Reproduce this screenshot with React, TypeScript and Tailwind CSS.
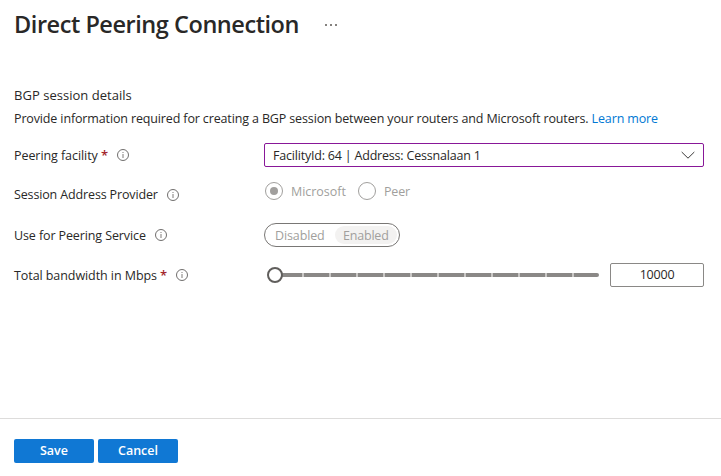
import React from 'react';

function InfoIcon({ className = '' }: { className?: string }) {
  return (
    <svg className={`h-3 w-3 shrink-0 ${className}`} viewBox="0 0 12 12" fill="none">
      <circle cx="6" cy="6" r="5.5" stroke="#605e5c" strokeWidth="0.9" />
      <path d="M6 5v4M6 3v1" stroke="#8a8886" strokeWidth="1.1" />
    </svg>
  );
}

function Label({ text, textClass, required = false }: { text: string; textClass: string; required?: boolean }) {
  return (
    <div className="flex h-6 w-[250px] shrink-0 items-center whitespace-nowrap">
      <span className={textClass}>{text}</span>
      {required && <span className="ml-[3px] w-[7px] text-[13px] font-semibold text-[#a4262c]">*</span>}
      <InfoIcon className="ml-[9px]" />
    </div>
  );
}

function Radio({ checked = false }: { checked?: boolean }) {
  return (
    <span className="flex h-[18px] w-[18px] items-center justify-center rounded-full border border-[#a19f9d]">
      {checked && <span className="h-2 w-2 rounded-full bg-[#a19f9d]" />}
    </span>
  );
}

export default function App() {
  return (
    <main className="flex h-[476px] w-[721px] flex-col overflow-hidden bg-white font-['Open_Sans','Noto_Sans',sans-serif] text-[12.5px] leading-[18px] text-[#292827]">
      <header className="flex h-[50px] items-center pl-[14px]">
        <h1 className="w-[285px] whitespace-nowrap pb-0.5 text-[23.5px] font-semibold leading-8 tracking-[-0.45px]">Direct Peering Connection</h1>
        <button className="ml-[26px] flex gap-[3px]" aria-label="More">
          <span className="h-[2px] w-[2px] bg-[#85827f]" />
          <span className="h-[2px] w-[2px] bg-[#85827f]" />
          <span className="h-[2px] w-[2px] bg-[#85827f]" />
        </button>
      </header>
      <section className="h-[368px] pl-[14px] pt-[36px]">
        <h2 className="h-6 text-[13px] tracking-[0.03px]">BGP session details</h2>
        <p className="whitespace-nowrap tracking-[-0.137px]">
          Provide information required for creating a BGP session between your routers and Microsoft routers.{' '}
          <a className="text-[#0078d4]">Learn more</a>
        </p>
        <div className="mt-[15px] flex">
          <Label text="Peering facility" textClass="w-[84px] pt-0.5 tracking-[-0.07px]" required />
          <div className="flex h-6 w-[440px] items-center justify-between rounded-[2px] border border-[#881798] pl-2 pr-2">
            <span className="pt-0.5 tracking-[-0.2px]">FacilityId: 64 | Address: Cessnalaan 1</span>
            <svg className="h-[8px] w-[14px]" viewBox="0 0 14 8" fill="none"><path d="M.7 1 7 7.2 13.3 1" stroke="#3b3a39" /></svg>
          </div>
        </div>
        <div className="mt-4 flex">
          <Label text="Session Address Provider" textClass="w-[144px] tracking-[-0.14px]" />
          <div className="-mt-1 flex h-6 items-center pl-px text-[#a19f9d]">
            <Radio checked />
            <span className="ml-2 w-[67px] pt-0.5 tracking-[-0.04px]">Microsoft</span>
            <Radio />
            <span className="ml-2 pt-0.5 tracking-[-0.2px]">Peer</span>
          </div>
        </div>
        <div className="mt-4 flex">
          <Label text="Use for Peering Service" textClass="w-[132px] pt-0.5 tracking-[-0.11px]" />
          <div className="flex h-6 w-[136px] items-center rounded-full border border-[#797775] text-[#a19f9d]">
            <span className="w-[70px] pl-[10px] pt-0.5 tracking-[-0.12px]">Disabled</span>
            <span className="h-[18px] w-[62px] rounded-full bg-[#f3f2f1] pl-2 leading-5 tracking-[-0.2px]">Enabled</span>
          </div>
        </div>
        <div className="mt-4 flex">
          <Label text="Total bandwidth in Mbps" textClass="w-[143px] pt-0.5 tracking-[-0.07px]" required />
          <div className="flex h-6 w-[335px] items-center pl-[3px]">
            <div className="z-10 h-4 w-4 shrink-0 rounded-full border-2 border-[#605e5c] bg-white" />
            <div className="-ml-2 grid h-1 w-[324px] shrink-0 grid-cols-12 overflow-hidden rounded-r-[2px] bg-[#8a8886]">
              {Array.from({ length: 12 }, (_, i) => (
                <span key={i} className="border-l-2 border-[#c8c6c4] first:border-l-0" />
              ))}
            </div>
          </div>
          <div className="ml-[11px] flex h-6 w-[94px] items-center justify-center rounded-[2px] border border-[#8a8886] tracking-[-0.2px]">10000</div>
        </div>
      </section>
      <footer className="flex h-[58px] gap-1 border-t border-[#dddcdb] pl-[14px] pt-5 font-semibold text-white">
        <button className="h-6 w-20 rounded-[2px] bg-[#1078d4]">Save</button>
        <button className="h-6 w-20 rounded-[2px] bg-[#1078d4]">Cancel</button>
      </footer>
    </main>
  );
}
